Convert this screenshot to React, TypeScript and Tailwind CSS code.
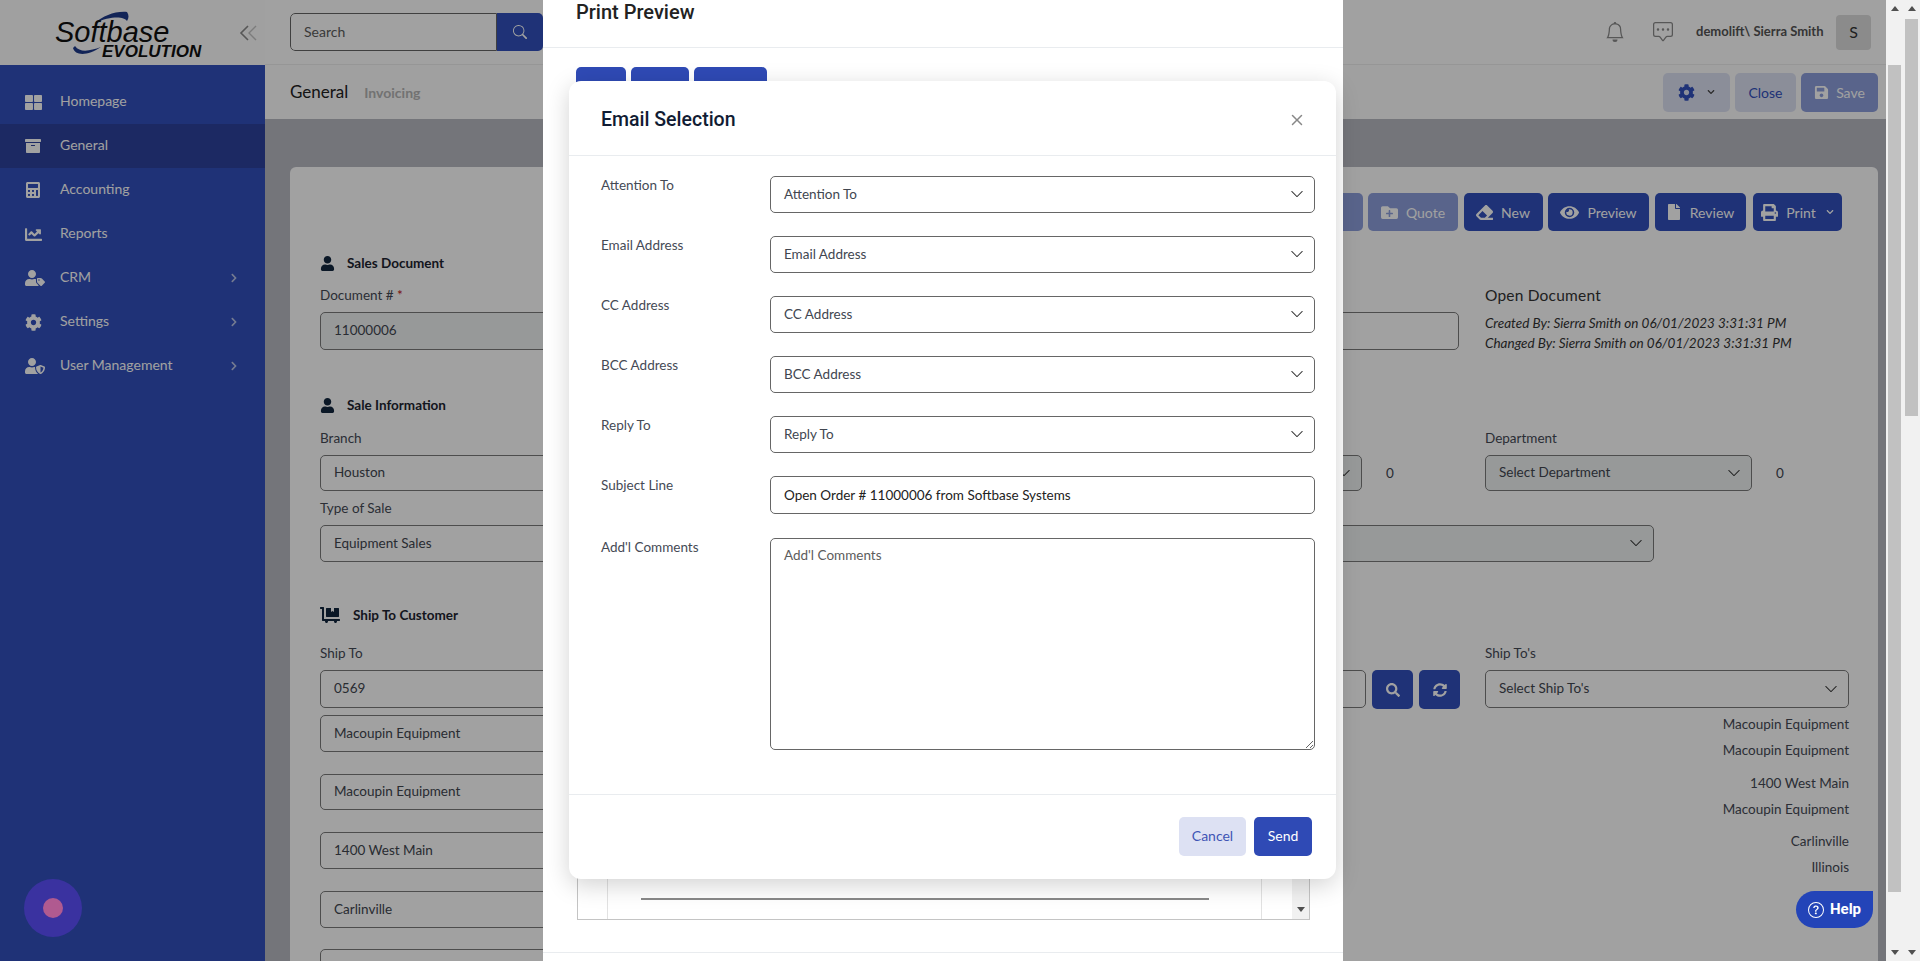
import type { ReactNode } from "react";
import {
  FaArchive,
  FaCalculator,
  FaChartLine,
  FaChevronDown,
  FaChevronRight,
  FaCog,
  FaDollyFlatbed,
  FaEraser,
  FaEye,
  FaFile,
  FaFolderPlus,
  FaPrint,
  FaSave,
  FaSearch,
  FaSyncAlt,
  FaThLarge,
  FaUser,
  FaUserShield,
  FaUserTag,
} from "react-icons/fa";
import { BsBell, BsChatSquareDots, BsChevronDown, BsQuestionCircle, BsSearch, BsX } from "react-icons/bs";

const NAV = [
  { label: "Homepage", icon: <FaThLarge size={17} /> },
  { label: "General", icon: <FaArchive size={16} />, active: true },
  { label: "Accounting", icon: <FaCalculator size={16} /> },
  { label: "Reports", icon: <FaChartLine size={17} /> },
  { label: "CRM", icon: <FaUserTag size={20} />, more: true },
  { label: "Settings", icon: <FaCog size={17} />, more: true },
  { label: "User Management", icon: <FaUserShield size={20} />, more: true },
];

const EMAIL_ROWS = ["Attention To", "Email Address", "CC Address", "BCC Address", "Reply To"];

function Box({ text, h = "h-[37px]", fill, chevron, className = "" }: { text?: string; h?: string; fill?: boolean; chevron?: boolean; className?: string }) {
  return (
    <div
      className={`${h} ${fill ? "bg-[#eff3f3]" : ""} ${className} flex items-center justify-between rounded-[5px] border border-[#7a7a7a] pb-[1px] pl-[13px] pr-[10px] text-[13.5px] text-[#414650]`}
    >
      <span>{text}</span>
      {chevron && <BsChevronDown size={14} className="text-[#333]" />}
    </div>
  );
}

function Heading({ icon, children, className = "" }: { icon: ReactNode; children: ReactNode; className?: string }) {
  return (
    <div className={`flex h-[20px] items-center text-[13.5px] font-bold text-[#1d2430] ${className}`}>
      <span className="flex w-[27px] text-[#12263f]">{icon}</span>
      {children}
    </div>
  );
}

function Label({ children, className = "" }: { children: ReactNode; className?: string }) {
  return <div className={`h-[20px] text-[13.5px] leading-[20px] text-[#454a55] ${className}`}>{children}</div>;
}

function ActionBtn({ icon, children, width, faded, className = "" }: { icon: ReactNode; children: ReactNode; width: string; faded?: boolean; className?: string }) {
  return (
    <button className={`${width} ${faded ? "bg-[#8e9fdc]" : "bg-[#3150bd]"} ${className} flex h-[38px] items-center justify-center gap-[8px] rounded-[5px] text-[14px] text-white`}>
      {icon}
      {children}
    </button>
  );
}

function Scrollbar({ thumb }: { thumb: string }) {
  return (
    <div className="relative flex h-full w-[17px] shrink-0 flex-col items-center justify-between bg-[#f1f1f1] py-[6px]">
      <span className="h-0 w-0 border-x-[4px] border-b-[5px] border-x-transparent border-b-[#505050]" />
      <div className={`${thumb} absolute left-[2px] w-[13px] bg-[#c1c1c1]`} />
      <span className="h-0 w-0 border-x-[4px] border-t-[5px] border-x-transparent border-t-[#505050]" />
    </div>
  );
}

function Sidebar() {
  return (
    <aside className="flex h-full w-[265px] shrink-0 flex-col bg-[#ffffff]">
      <div className="relative h-[65px] shrink-0 bg-[#fdfdfd]">
        <svg className="absolute left-[60px] top-[8px]" width="80" height="50" viewBox="0 0 80 50" fill="none">
          <path d="M35 15 C43 8 55 3 67 4 C69 7 69 10 67 13 C64 8 50 8 35 15 Z" fill="#1e3a8a" />
          <path d="M13 40 C15 48 28 48 41 39 C30 43 20 45 15 38 Z" fill="#1e3a8a" />
        </svg>
        <span className="absolute left-[55px] top-[20px] font-['Liberation_Sans',sans-serif] text-[29px] italic leading-[25px] text-[#111]">
          Softbase
        </span>
        <span className="absolute left-[102px] top-[45px] font-['Liberation_Sans',sans-serif] text-[17px] font-bold italic leading-[14px] text-[#111]">
          EVOLUTION
        </span>
        <svg className="absolute left-[239px] top-[23px]" width="20" height="20" viewBox="0 0 20 20" fill="none">
          <path d="M9 3 L2 10 L9 17" stroke="#8a8a8a" strokeWidth="1.6" />
          <path d="M17 3 L10 10 L17 17" stroke="#c4c4c4" strokeWidth="1.4" />
        </svg>
      </div>
      <nav className="flex-1 bg-[#3150bd] pt-[15px]">
        {NAV.map((n) => (
          <div
            key={n.label}
            className={`${n.active ? "bg-[#2d429d]" : ""} flex h-[44px] items-center pl-[25px] pr-[26px] text-[14px] text-white`}
          >
            <span className="flex w-[35px] shrink-0">{n.icon}</span>
            <span className="-mt-[3px] flex-1">{n.label}</span>
            {n.more && <FaChevronRight size={10} className="text-[#b9c3e6]" />}
          </div>
        ))}
      </nav>
    </aside>
  );
}

function TopBar() {
  return (
    <div className="flex h-[65px] shrink-0 items-center border-b border-[#eeeeee] bg-white pl-[25px] pr-[15px]">
      <div className="flex h-[38px] w-[253px] overflow-hidden rounded-[5px]">
        <div className="flex flex-1 items-center rounded-l-[5px] border border-[#666] pb-[2px] pl-[13px] text-[14px] text-[#5c5c5c]">Search</div>
        <div className="flex w-[46px] items-center justify-center bg-[#3150bd] text-white">
          <BsSearch size={14} />
        </div>
      </div>
      <div className="ml-auto flex items-center">
        <BsBell size={20} className="text-[#8a8a8a]" />
        <BsChatSquareDots size={20} className="ml-[28px] text-[#8a8a8a]" />
        <span className="ml-[23px] w-[130px] whitespace-nowrap text-[13px] font-bold text-[#555]">demolift\ Sierra Smith</span>
        <span className="ml-[10px] flex h-[35px] w-[35px] items-center justify-center rounded-[4px] bg-[#dcdcdc] text-[16px] text-[#333]">S</span>
      </div>
    </div>
  );
}

function SubBar() {
  return (
    <div className="flex h-[54px] shrink-0 items-center bg-[#fdfdfd] pl-[25px] pr-[8px]">
      <span className="text-[17px] text-[#222]">General</span>
      <span className="ml-[16px] text-[14px] font-bold text-[#b5b5b5]">Invoicing</span>
      <div className="ml-auto flex gap-[5px]">
        <button className="flex h-[39px] w-[67px] items-center justify-center gap-[12px] rounded-[5px] bg-[#dde1f3] text-[#3150bd]">
          <FaCog size={17} />
          <FaChevronDown size={8} className="text-[#444]" />
        </button>
        <button className="flex h-[39px] w-[61px] items-center justify-center rounded-[5px] bg-[#dde1f3] text-[14px] text-[#3150bd]">Close</button>
        <button className="flex h-[39px] w-[77px] items-center justify-center gap-[7px] rounded-[5px] bg-[#8e9fdc] text-[14px] text-white">
          <FaSave size={15} />
          Save
        </button>
      </div>
    </div>
  );
}

function Card() {
  return (
    <div className="ml-[25px] mr-[8px] mt-[48px] flex-1 rounded-t-[6px] bg-white pb-10 pl-[30px] pr-[29px] pt-[26px]">
      <div className="mr-[7px] flex justify-end gap-[5.5px]">
        <ActionBtn faded width="w-[110px]" icon={<FaFile size={14} />}>Reopen</ActionBtn>
        <ActionBtn faded width="w-[90px]" icon={<FaFolderPlus size={17} />}>Quote</ActionBtn>
        <ActionBtn width="w-[79px]" icon={<FaEraser size={17} />}>New</ActionBtn>
        <ActionBtn width="w-[101px]" icon={<FaEye size={19} />}>Preview</ActionBtn>
        <ActionBtn width="w-[91px]" icon={<FaFile size={16} />}>Review</ActionBtn>
        <ActionBtn className="ml-[2px]" width="w-[89px]" icon={<FaPrint size={17} />}>
          Print <FaChevronDown size={8} className="ml-[2px]" />
        </ActionBtn>
      </div>

      <Heading className="mt-[22px]" icon={<FaUser size={15} />}>Sales Document</Heading>
      <div className="mt-[12px] grid h-[65px] grid-cols-[1139px_1fr] gap-x-[26px]">
        <div>
          <Label>Document # <span className="text-[#c01010]">*</span></Label>
          <div className="mt-[7px] flex gap-[10px]">
            <Box fill text="11000006" h="h-[38px]" className="w-[420px]" />
            <Box h="h-[38px]" className="flex-1" />
          </div>
        </div>
        <div>
          <div className="h-[20px] text-[15.5px] leading-[20px] tracking-[0.2px] text-[#333]">Open Document</div>
          <div className="mt-[8px] h-[20px] text-[13.5px] italic leading-[20px] text-[#333]">Created By: Sierra Smith on 06/01/2023 3:31:31 PM</div>
          <div className="h-[20px] text-[13.5px] italic leading-[20px] text-[#333]">Changed By: Sierra Smith on 06/01/2023 3:31:31 PM</div>
        </div>
      </div>

      <Heading className="mt-[45px]" icon={<FaUser size={15} />}>Sale Information</Heading>
      <div className="mt-[13px] grid grid-cols-[1139px_1fr] gap-x-[26px]">
        <div>
          <Label>Branch</Label>
          <div className="mt-[7px] flex items-center gap-[10px]">
            <Box text="Houston" h="h-[36px]" className="w-[420px]" />
            <Box fill chevron h="h-[36px]" className="flex-1" />
            <span className="ml-[14px] w-[73px] text-[13.5px] text-[#414650]">0</span>
          </div>
        </div>
        <div>
          <Label>Department</Label>
          <div className="mt-[7px] flex items-center">
            <Box fill chevron text="Select Department" h="h-[36px]" className="w-[267px]" />
            <span className="ml-[24px] text-[13.5px] text-[#414650]">0</span>
          </div>
        </div>
      </div>
      <Label className="mt-[7px]">Type of Sale</Label>
      <div className="mt-[7px] flex gap-[10px]">
        <Box text="Equipment Sales" className="w-[420px]" />
        <Box fill chevron className="w-[904px]" />
      </div>

      <Heading className="mt-[43px]" icon={<FaDollyFlatbed size={20} className="mr-[7px] w-[20px]" />}>
        <span className="ml-[6px]">Ship To Customer</span>
      </Heading>
      <div className="mt-[18px] grid grid-cols-[1140px_1fr] gap-x-[25px]">
        <div>
          <Label>Ship To</Label>
          <div className="mt-[7px] flex h-[38px] gap-[6px]">
            <Box text="0569" h="h-[38px]" className="w-[420px]" />
            <Box h="h-[38px]" className="flex-1" />
            <button className="flex h-[39px] w-[41px] items-center justify-center rounded-[5px] bg-[#3150bd] text-white"><FaSearch size={14} /></button>
            <button className="flex h-[39px] w-[41px] items-center justify-center rounded-[5px] bg-[#3150bd] text-white"><FaSyncAlt size={14} /></button>
          </div>
          <Box text="Macoupin Equipment" className="mt-[7px] w-[420px]" />
          <Box text="Macoupin Equipment" h="h-[36px]" className="mt-[22px] w-[420px]" />
          <Box text="1400 West Main" className="mt-[22px] w-[420px]" />
          <Box text="Carlinville" className="mt-[22px] w-[420px]" />
          <Box className="mt-[21px] w-[420px]" />
        </div>
        <div>
          <Label>Ship To's</Label>
          <Box chevron text="Select Ship To's" h="h-[38px]" className="mt-[7px]" />
          <div className="text-right text-[13.5px] leading-[20px] text-[#454a55]">
            <div className="mt-[6px]">Macoupin Equipment</div>
            <div className="mt-[6px]">Macoupin Equipment</div>
            <div className="mt-[13px]">1400 West Main</div>
            <div className="mt-[6px]">Macoupin Equipment</div>
            <div className="mt-[12px]">Carlinville</div>
            <div className="mt-[6px]">Illinois</div>
          </div>
        </div>
      </div>
    </div>
  );
}

function PrintPreview() {
  return (
    <div className="absolute left-[543px] top-0 flex h-[961px] w-[800px] flex-col bg-white">
      <div className="flex h-[48px] shrink-0 border-b border-[#e9ecef] pl-[33px]">
        <span className="-mt-[1px] font-[Roboto,sans-serif] text-[20px] font-medium leading-[26px] text-[#222]">Print Preview</span>
      </div>
      <div className="ml-[33px] mt-[19px] flex gap-[5px]">
        <div className="h-[20px] w-[50px] rounded-t-[5px] bg-[#2f4ab5]" />
        <div className="h-[20px] w-[58px] rounded-t-[5px] bg-[#2f4ab5]" />
        <div className="h-[20px] w-[73px] rounded-t-[5px] bg-[#2f4ab5]" />
      </div>
      <div className="ml-[34px] flex h-[833px] w-[733px] border border-t-0 border-[#c4c4c4]">
        <div className="w-[30px] border-r border-[#e2e2e2]" />
        <div className="flex flex-1 flex-col justify-end border-r border-[#e2e2e2] pb-[19px] pl-[33px] pr-[52px]">
          <div className="h-[2px] bg-[#888]" />
        </div>
        <div className="w-[30px]" />
        <div className="flex w-[17px] flex-col items-center justify-end bg-[#f1f1f1] pb-[7px]">
          <span className="h-0 w-0 border-x-[4px] border-t-[5px] border-x-transparent border-t-[#505050]" />
        </div>
      </div>
      <div className="mt-[32px] border-t border-[#e9ecef]" />
    </div>
  );
}

function EmailSelection() {
  return (
    <div className="absolute left-[569px] top-[81px] h-[798px] w-[767px] rounded-[12px] bg-white shadow-[0_6px_24px_rgba(0,0,0,0.18)]">
      <div className="flex h-[75px] items-center justify-between border-b border-[#e9ecef] pl-[32px] pr-[27px] pt-[4px]">
        <h2 className="font-[Roboto,sans-serif] text-[19.5px] font-medium text-[#111c33]">Email Selection</h2>
        <BsX size={24} className="text-[#888]" />
      </div>
      <div className="h-[638px] pl-[32px] pr-[21px] pt-[20px]">
        {EMAIL_ROWS.map((r) => (
          <div key={r} className="mb-[23px] grid h-[37px] grid-cols-[169px_1fr]">
            <span className="text-[13.5px] leading-[18px] text-[#454a55]">{r}</span>
            <Box chevron text={r} className="!border-[#666]" />
          </div>
        ))}
        <div className="mb-[24px] grid h-[38px] grid-cols-[169px_1fr]">
          <span className="text-[13.5px] leading-[18px] text-[#454a55]">Subject Line</span>
          <input
            readOnly
            value="Open Order # 11000006 from Softbase Systems"
            className="h-[38px] rounded-[5px] border border-[#666] pl-[13px] text-[13.5px] text-[#222] outline-none"
          />
        </div>
        <div className="grid grid-cols-[169px_1fr]">
          <span className="text-[13.5px] leading-[18px] text-[#454a55]">Add'l Comments</span>
          <textarea
            readOnly
            placeholder="Add'l Comments"
            className="h-[212px] rounded-[5px] border border-[#666] px-[13px] py-[6px] text-[13.5px] outline-none placeholder:text-[#5c5c5c]"
          />
        </div>
      </div>
      <div className="flex justify-end gap-[8px] border-t border-[#e9ecef] pr-[24px] pt-[22px]">
        <button className="h-[39px] w-[67px] rounded-[5px] bg-[#dde1f3] pb-[2px] text-[14px] text-[#3f55b5]">Cancel</button>
        <button className="h-[39px] w-[58px] rounded-[5px] bg-[#2f4ab5] pb-[2px] text-[14px] text-white">Send</button>
      </div>
    </div>
  );
}

export default function App() {
  return (
    <div className="flex h-[961px] w-[1920px] overflow-hidden bg-white font-[Lato,sans-serif]">
      <div className="relative flex h-full w-[1886px] shrink-0 overflow-hidden">
        <Sidebar />
        <main className="flex h-full flex-1 flex-col bg-[#b8b9c2]">
          <TopBar />
          <SubBar />
          <Card />
        </main>

        {/* backdrop, then the two stacked dialogs and the floating widgets */}
        <div className="absolute inset-0 bg-black/[0.37]" />
        <PrintPreview />
        <EmailSelection />
        <div className="absolute left-[24px] top-[879px] flex h-[58px] w-[58px] items-center justify-center rounded-full bg-[#3a32a0]">
          <span className="h-[20px] w-[20px] rounded-full bg-[#b05a90]" />
        </div>
        <button className="absolute left-[1796px] top-[891px] flex h-[37px] w-[77px] items-center justify-center gap-[6px] rounded-full rounded-tr-[4px] bg-[#2344b8] font-[Roboto,sans-serif] text-[15px] font-bold text-white">
          <BsQuestionCircle size={16} />
          Help
        </button>
      </div>
      <Scrollbar thumb="top-[65px] h-[827px]" />
      <Scrollbar thumb="top-[19px] h-[397px]" />
    </div>
  );
}
